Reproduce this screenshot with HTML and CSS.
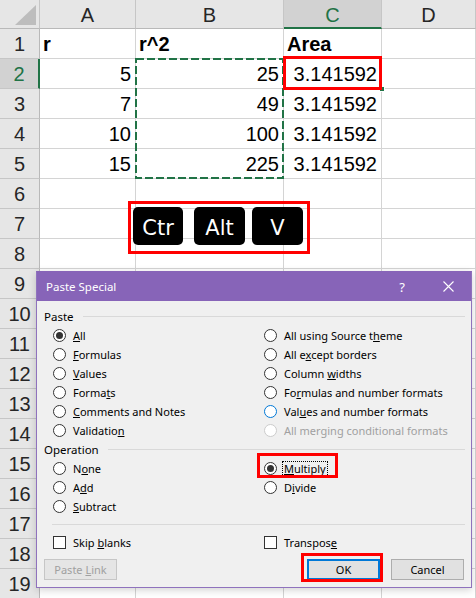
FILE: index.html
```html
<!DOCTYPE html>
<html>
<head>
<meta charset="utf-8">
<link rel="stylesheet" href="styles.css">
</head>
<body>
<div class="sheet">
  <div class="corner"><svg width="39" height="28" viewBox="0 0 39 28"><polygon points="36,5 36,25 15,25" fill="#bdbdbd"/></svg></div>
  <div class="ch">A</div><div class="ch">B</div><div class="ch ch-sel">C</div><div class="ch">D</div>

  <div class="rh">1</div><div class="cell b">r</div><div class="cell b">r^2</div><div class="cell b">Area</div><div class="cell"></div>
  <div class="rh rh-sel">2</div><div class="cell num">5</div><div class="cell num">25</div><div class="cell num">3.141592</div><div class="cell"></div>
  <div class="rh">3</div><div class="cell num">7</div><div class="cell num">49</div><div class="cell num">3.141592</div><div class="cell"></div>
  <div class="rh">4</div><div class="cell num">10</div><div class="cell num">100</div><div class="cell num">3.141592</div><div class="cell"></div>
  <div class="rh">5</div><div class="cell num">15</div><div class="cell num">225</div><div class="cell num">3.141592</div><div class="cell"></div>
  <div class="rh">6</div><div class="cell"></div><div class="cell"></div><div class="cell"></div><div class="cell"></div>
  <div class="rh">7</div><div class="cell"></div><div class="cell"></div><div class="cell"></div><div class="cell"></div>
  <div class="rh">8</div><div class="cell"></div><div class="cell"></div><div class="cell"></div><div class="cell"></div>
  <div class="rh">9</div><div class="cell"></div><div class="cell"></div><div class="cell"></div><div class="cell"></div>
  <div class="rh">10</div><div class="cell"></div><div class="cell"></div><div class="cell"></div><div class="cell"></div>
  <div class="rh">11</div><div class="cell"></div><div class="cell"></div><div class="cell"></div><div class="cell"></div>
  <div class="rh">12</div><div class="cell"></div><div class="cell"></div><div class="cell"></div><div class="cell"></div>
  <div class="rh">13</div><div class="cell"></div><div class="cell"></div><div class="cell"></div><div class="cell"></div>
  <div class="rh">14</div><div class="cell"></div><div class="cell"></div><div class="cell"></div><div class="cell"></div>
  <div class="rh">15</div><div class="cell"></div><div class="cell"></div><div class="cell"></div><div class="cell"></div>
  <div class="rh">16</div><div class="cell"></div><div class="cell"></div><div class="cell"></div><div class="cell"></div>
  <div class="rh">17</div><div class="cell"></div><div class="cell"></div><div class="cell"></div><div class="cell"></div>
  <div class="rh">18</div><div class="cell"></div><div class="cell"></div><div class="cell"></div><div class="cell"></div>
  <div class="rh">19</div><div class="cell"></div><div class="cell"></div><div class="cell"></div><div class="cell"></div>

  <svg class="ants" width="150" height="121" viewBox="0 0 150 121"><rect x="1" y="1" width="147" height="119" fill="none" stroke="#217346" stroke-width="2" stroke-dasharray="8 3"/></svg>
  <div class="fill-handle"></div>
  <div class="active-mark"></div>

  <div class="keys">
    <div class="key">Ctr</div>
    <div class="key key-alt">Alt</div>
    <div class="key key-v">V</div>
  </div>

  <div class="dialog">
    <div class="titlebar">
      <div class="title">Paste Special</div>
      <div class="tb-btn">?</div>
      <div class="tb-btn"><svg width="11" height="11" viewBox="0 0 11 11"><path d="M0.5 0.5 L10.5 10.5 M10.5 0.5 L0.5 10.5" stroke="#fff" stroke-width="1.1" fill="none"/></svg></div>
    </div>
    <div class="body">
      <div class="group-head">Paste</div>
      <div class="opts">
        <div class="opt"><span class="radio on"></span><span><u>A</u>ll</span></div>
        <div class="opt"><span class="radio"></span><span>All using Source t<u>h</u>eme</span></div>
        <div class="opt"><span class="radio"></span><span><u>F</u>ormulas</span></div>
        <div class="opt"><span class="radio"></span><span>All e<u>x</u>cept borders</span></div>
        <div class="opt"><span class="radio"></span><span><u>V</u>alues</span></div>
        <div class="opt"><span class="radio"></span><span>Column <u>w</u>idths</span></div>
        <div class="opt"><span class="radio"></span><span>Forma<u>t</u>s</span></div>
        <div class="opt"><span class="radio"></span><span>Fo<u>r</u>mulas and number formats</span></div>
        <div class="opt"><span class="radio"></span><span><u>C</u>omments and Notes</span></div>
        <div class="opt"><span class="radio hover"></span><span>Val<u>u</u>es and number formats</span></div>
        <div class="opt"><span class="radio"></span><span>Validatio<u>n</u></span></div>
        <div class="opt disabled"><span class="radio"></span><span>All merging conditional formats</span></div>
      </div>
      <div class="group-head">Operation</div>
      <div class="opts">
        <div class="opt"><span class="radio"></span><span>N<u>o</u>ne</span></div>
        <div class="opt marked"><span class="radio on"></span><span class="focus"><u>M</u>ultiply</span><span class="mark mark-multiply"></span></div>
        <div class="opt"><span class="radio"></span><span>A<u>d</u>d</span></div>
        <div class="opt"><span class="radio"></span><span>D<u>i</u>vide</span></div>
        <div class="opt"><span class="radio"></span><span><u>S</u>ubtract</span></div>
        <div class="opt"></div>
      </div>
      <div class="sep"></div>
      <div class="opts">
        <div class="opt"><span class="check"></span><span>Skip <u>b</u>lanks</span></div>
        <div class="opt"><span class="check"></span><span>Transpos<u>e</u></span></div>
      </div>
      <div class="buttons">
        <div class="btn disabled"><span>Paste <u>L</u>ink</span></div>
        <div class="spacer"></div>
        <div class="marked-btn"><div class="btn default"><span>OK</span></div><span class="mark mark-ok"></span></div>
        <div class="btn cancel"><span>Cancel</span></div>
      </div>
    </div>
  </div>
</div>
</body>
</html>
```
FILE: styles.css
```css
body {
  margin: 0;
  width: 476px;
  height: 598px;
  overflow: hidden;
  background: #fff;
  font-family: "Liberation Sans", Arial, sans-serif;
}

.sheet {
  position: relative;
  display: grid;
  grid-template-columns: 40px 96px 148px 98px 94px;
  grid-template-rows: 29px repeat(19, 30px);
}

.corner, .ch, .rh, .cell {
  box-sizing: border-box;
  border-right: 1px solid #d4d4d4;
  border-bottom: 1px solid #d4d4d4;
  font-size: 20px;
  color: #000;
  white-space: nowrap;
  overflow: hidden;
}

.corner {
  background: #e6e6e6;
  border-right-color: #c6c6c6;
  border-bottom-color: #b9b9b9;
}
.corner svg { display: block; }

.ch {
  background: #e6e6e6;
  text-align: center;
  color: #262626;
  padding-top: 3px;
  line-height: 25px;
  border-right-color: #c6c6c6;
  border-bottom-color: #b9b9b9;
}
.ch-sel {
  background: #d2d2d2;
  color: #217346;
  border-bottom: 2px solid #217346;
}

.rh {
  background: #e6e6e6;
  text-align: center;
  color: #262626;
  padding-top: 2px;
  line-height: 27px;
  border-right-color: #b9b9b9;
  border-bottom-color: #c6c6c6;
}
.rh-sel {
  background: #d2d2d2;
  color: #217346;
  border-right: 2px solid #217346;
}

.cell {
  padding: 2px 4px 0 4px;
  line-height: 27px;
}
.cell.num { text-align: right; }
.cell.b { font-weight: bold; padding-left: 3px; }

.ants {
  position: absolute;
  left: 135px;
  top: 58px;
}

.fill-handle {
  position: absolute;
  left: 379px;
  top: 86px;
  width: 6px;
  height: 6px;
  background: #217346;
  border: 1px solid #fff;
  box-sizing: border-box;
}

.active-mark {
  position: absolute;
  left: 283px;
  top: 56px;
  width: 99px;
  height: 34px;
  box-sizing: border-box;
  border: 3px solid #ff0000;
}

.keys {
  position: absolute;
  left: 128px;
  top: 201px;
  width: 182px;
  height: 53px;
  box-sizing: border-box;
  border: 3px solid #ff0000;
  display: flex;
  align-items: flex-start;
  padding: 3px 0 0 2px;
}
.key {
  width: 50px;
  height: 38px;
  box-sizing: border-box;
  background: #000;
  border-radius: 5px;
  color: #fff;
  font-family: "DejaVu Sans", sans-serif;
  font-size: 21px;
  display: flex;
  align-items: center;
  justify-content: center;
  padding-top: 4px;
}
.key-alt { width: 51px; margin-left: 11px; }
.key-v { width: 51px; margin-left: 7px; }

.dialog {
  position: absolute;
  left: 36px;
  top: 271px;
  width: 436px;
  height: 317px;
  box-sizing: border-box;
  border: 1px solid #8f72bd;
  border-top-color: #8764b8;
  background: #f0f0f0;
  font-family: "Noto Sans", sans-serif;
  font-size: 11px;
  color: #000;
  box-shadow: 0 2px 8px rgba(0, 0, 0, 0.18);
}

.titlebar {
  height: 29px;
  background: #8764b8;
  color: #fff;
  display: flex;
  align-items: center;
}
.title {
  flex: 1;
  padding-left: 9px;
  font-size: 11.5px;
}
.tb-btn {
  width: 46px;
  display: flex;
  justify-content: center;
  align-items: center;
  font-size: 13px;
}

.body {
  padding: 6px 6px 0 7px;
}

.group-head {
  display: flex;
  align-items: center;
  height: 19px;
  font-size: 11.5px;
}
.group-head::after {
  content: "";
  flex: 1;
  height: 1px;
  background: #d9d9d9;
  margin-left: 9px;
}

.opts {
  display: grid;
  grid-template-columns: 211px 1fr;
  grid-auto-rows: 19px;
  padding-left: 9px;
}

.opt {
  display: flex;
  align-items: center;
  white-space: nowrap;
}

.radio {
  width: 13px;
  height: 13px;
  box-sizing: border-box;
  border: 1px solid #333;
  border-radius: 50%;
  background: #fff;
  margin-right: 7px;
  flex: none;
  display: flex;
  align-items: center;
  justify-content: center;
}
.radio.on::after {
  content: "";
  width: 7px;
  height: 7px;
  border-radius: 50%;
  background: #333;
}
.radio.hover { border-color: #0078d7; }
.opt.disabled { color: #a0a0a0; }
.opt.disabled .radio { border-color: #cccccc; }

.marked {
  position: relative;
  justify-self: start;
}
.focus {
  outline: 1px dotted #000;
  padding: 0 1px;
  margin-left: -1px;
  line-height: 14px;
}

.mark {
  position: absolute;
  box-sizing: border-box;
  border: 3px solid #ff0000;
  pointer-events: none;
}
.mark-multiply {
  left: -7px;
  top: -6px;
  width: 81px;
  height: 25px;
}

.sep {
  height: 1px;
  background: #d9d9d9;
  margin: 8px 0 8px 8px;
}

.check {
  width: 13px;
  height: 13px;
  box-sizing: border-box;
  border: 1px solid #333;
  background: #fff;
  margin-right: 7px;
  flex: none;
}

.buttons {
  display: flex;
  margin-top: 7px;
  padding-right: 1px;
}
.spacer { flex: 1; }

.btn {
  width: 73px;
  height: 21px;
  box-sizing: border-box;
  border: 1px solid #adadad;
  background: #e1e1e1;
  display: flex;
  align-items: center;
  justify-content: center;
  white-space: nowrap;
}
.btn.disabled {
  color: #a0a0a0;
  border-color: #c6c6c6;
  background: #e5e5e5;
}
.btn.default {
  border: 2px solid #0078d7;
}
.btn.cancel { margin-left: 11px; }

.marked-btn { position: relative; }
.mark-ok {
  left: -6px;
  top: -6px;
  width: 82px;
  height: 29px;
}
```
